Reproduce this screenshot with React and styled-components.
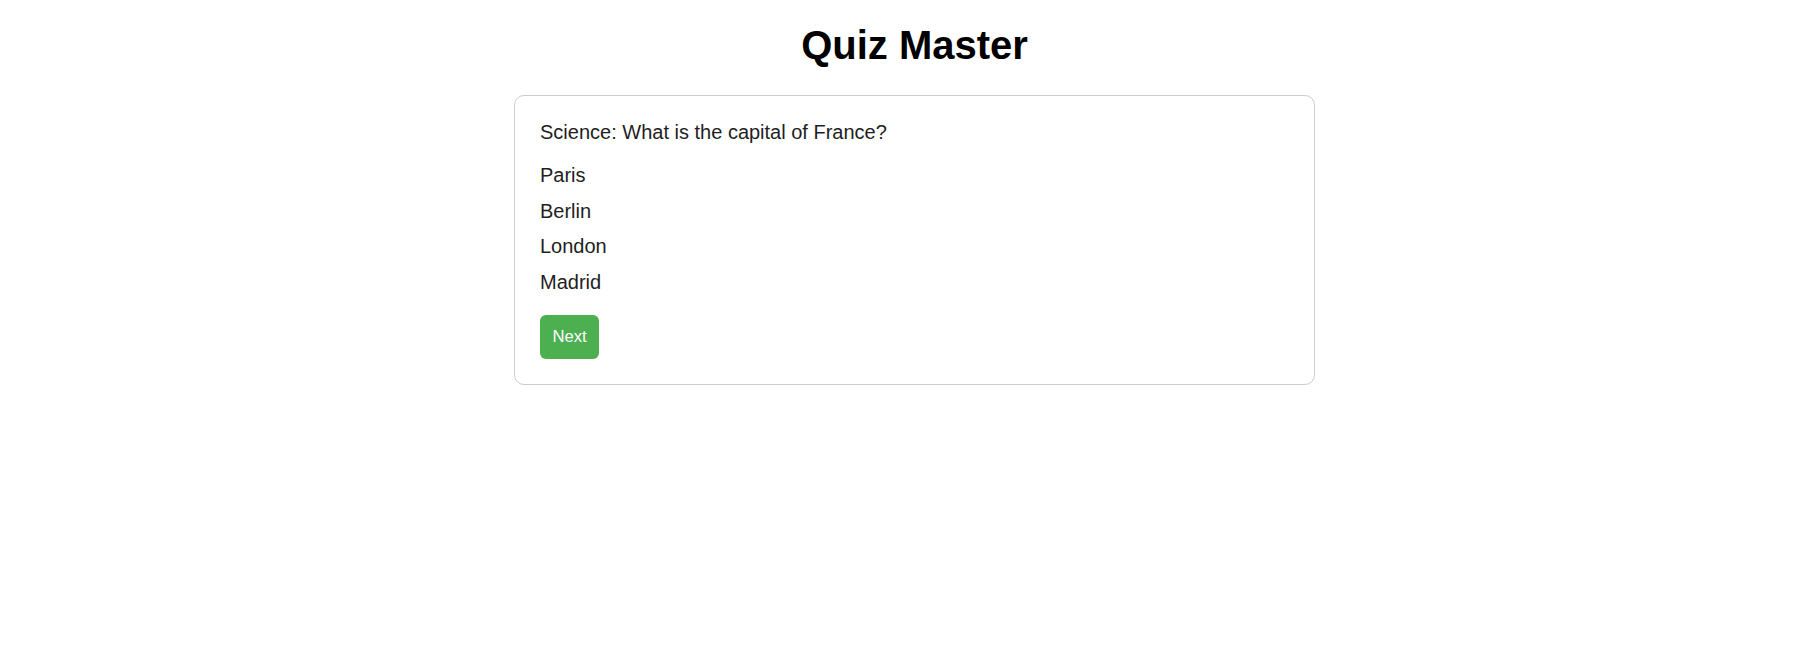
import React from "react";
import styled, { createGlobalStyle } from "styled-components";

const GlobalStyle = createGlobalStyle`
  body {
    margin: 0;
    background: #fff;
    font-family: "Liberation Sans", Arial, sans-serif;
  }
`;

const question = {
  category: "Science",
  text: "What is the capital of France?",
  options: ["Paris", "Berlin", "London", "Madrid"],
};

const App = () => {
  return (
    <Page>
      <GlobalStyle />
      <Title>Quiz Master</Title>
      <Card>
        <Question>
          {question.category}: {question.text}
        </Question>
        <Options>
          {question.options.map((opt) => (
            <Option key={opt}>{opt}</Option>
          ))}
        </Options>
        <NextButton>Next</NextButton>
      </Card>
    </Page>
  );
};

const Page = styled.div`
  display: flex;
  flex-direction: column;
  align-items: center;
  padding-left: 28px;
  padding-top: 22px;
  box-sizing: border-box;
  width: 100%;
`;

const Title = styled.h1`
  margin: 0 0 27px;
  font-size: 40px;
  font-weight: bold;
  color: #000;
  line-height: 46px;
`;

const Card = styled.div`
  width: 801px;
  box-sizing: border-box;
  border: 1px solid #ccc;
  border-radius: 10px;
  padding: 25px;
  background: #fff;
  display: flex;
  flex-direction: column;
  align-items: flex-start;
`;

const Question = styled.div`
  font-size: 20px;
  line-height: 23px;
  color: #1e1e1e;
  margin-bottom: 20px;
`;

const Options = styled.div`
  display: flex;
  flex-direction: column;
  gap: 12.5px;
  margin-bottom: 21px;
`;

const Option = styled.div`
  font-size: 20px;
  line-height: 23px;
  color: #1e1e1e;
  cursor: pointer;
`;

const NextButton = styled.button`
  background: #4caf50;
  color: #fff;
  border: none;
  border-radius: 6px;
  padding: 12.5px;
  font-family: "Liberation Sans", Arial, sans-serif;
  font-size: 16.67px;
  line-height: 19px;
  cursor: pointer;
`;

export default App;
